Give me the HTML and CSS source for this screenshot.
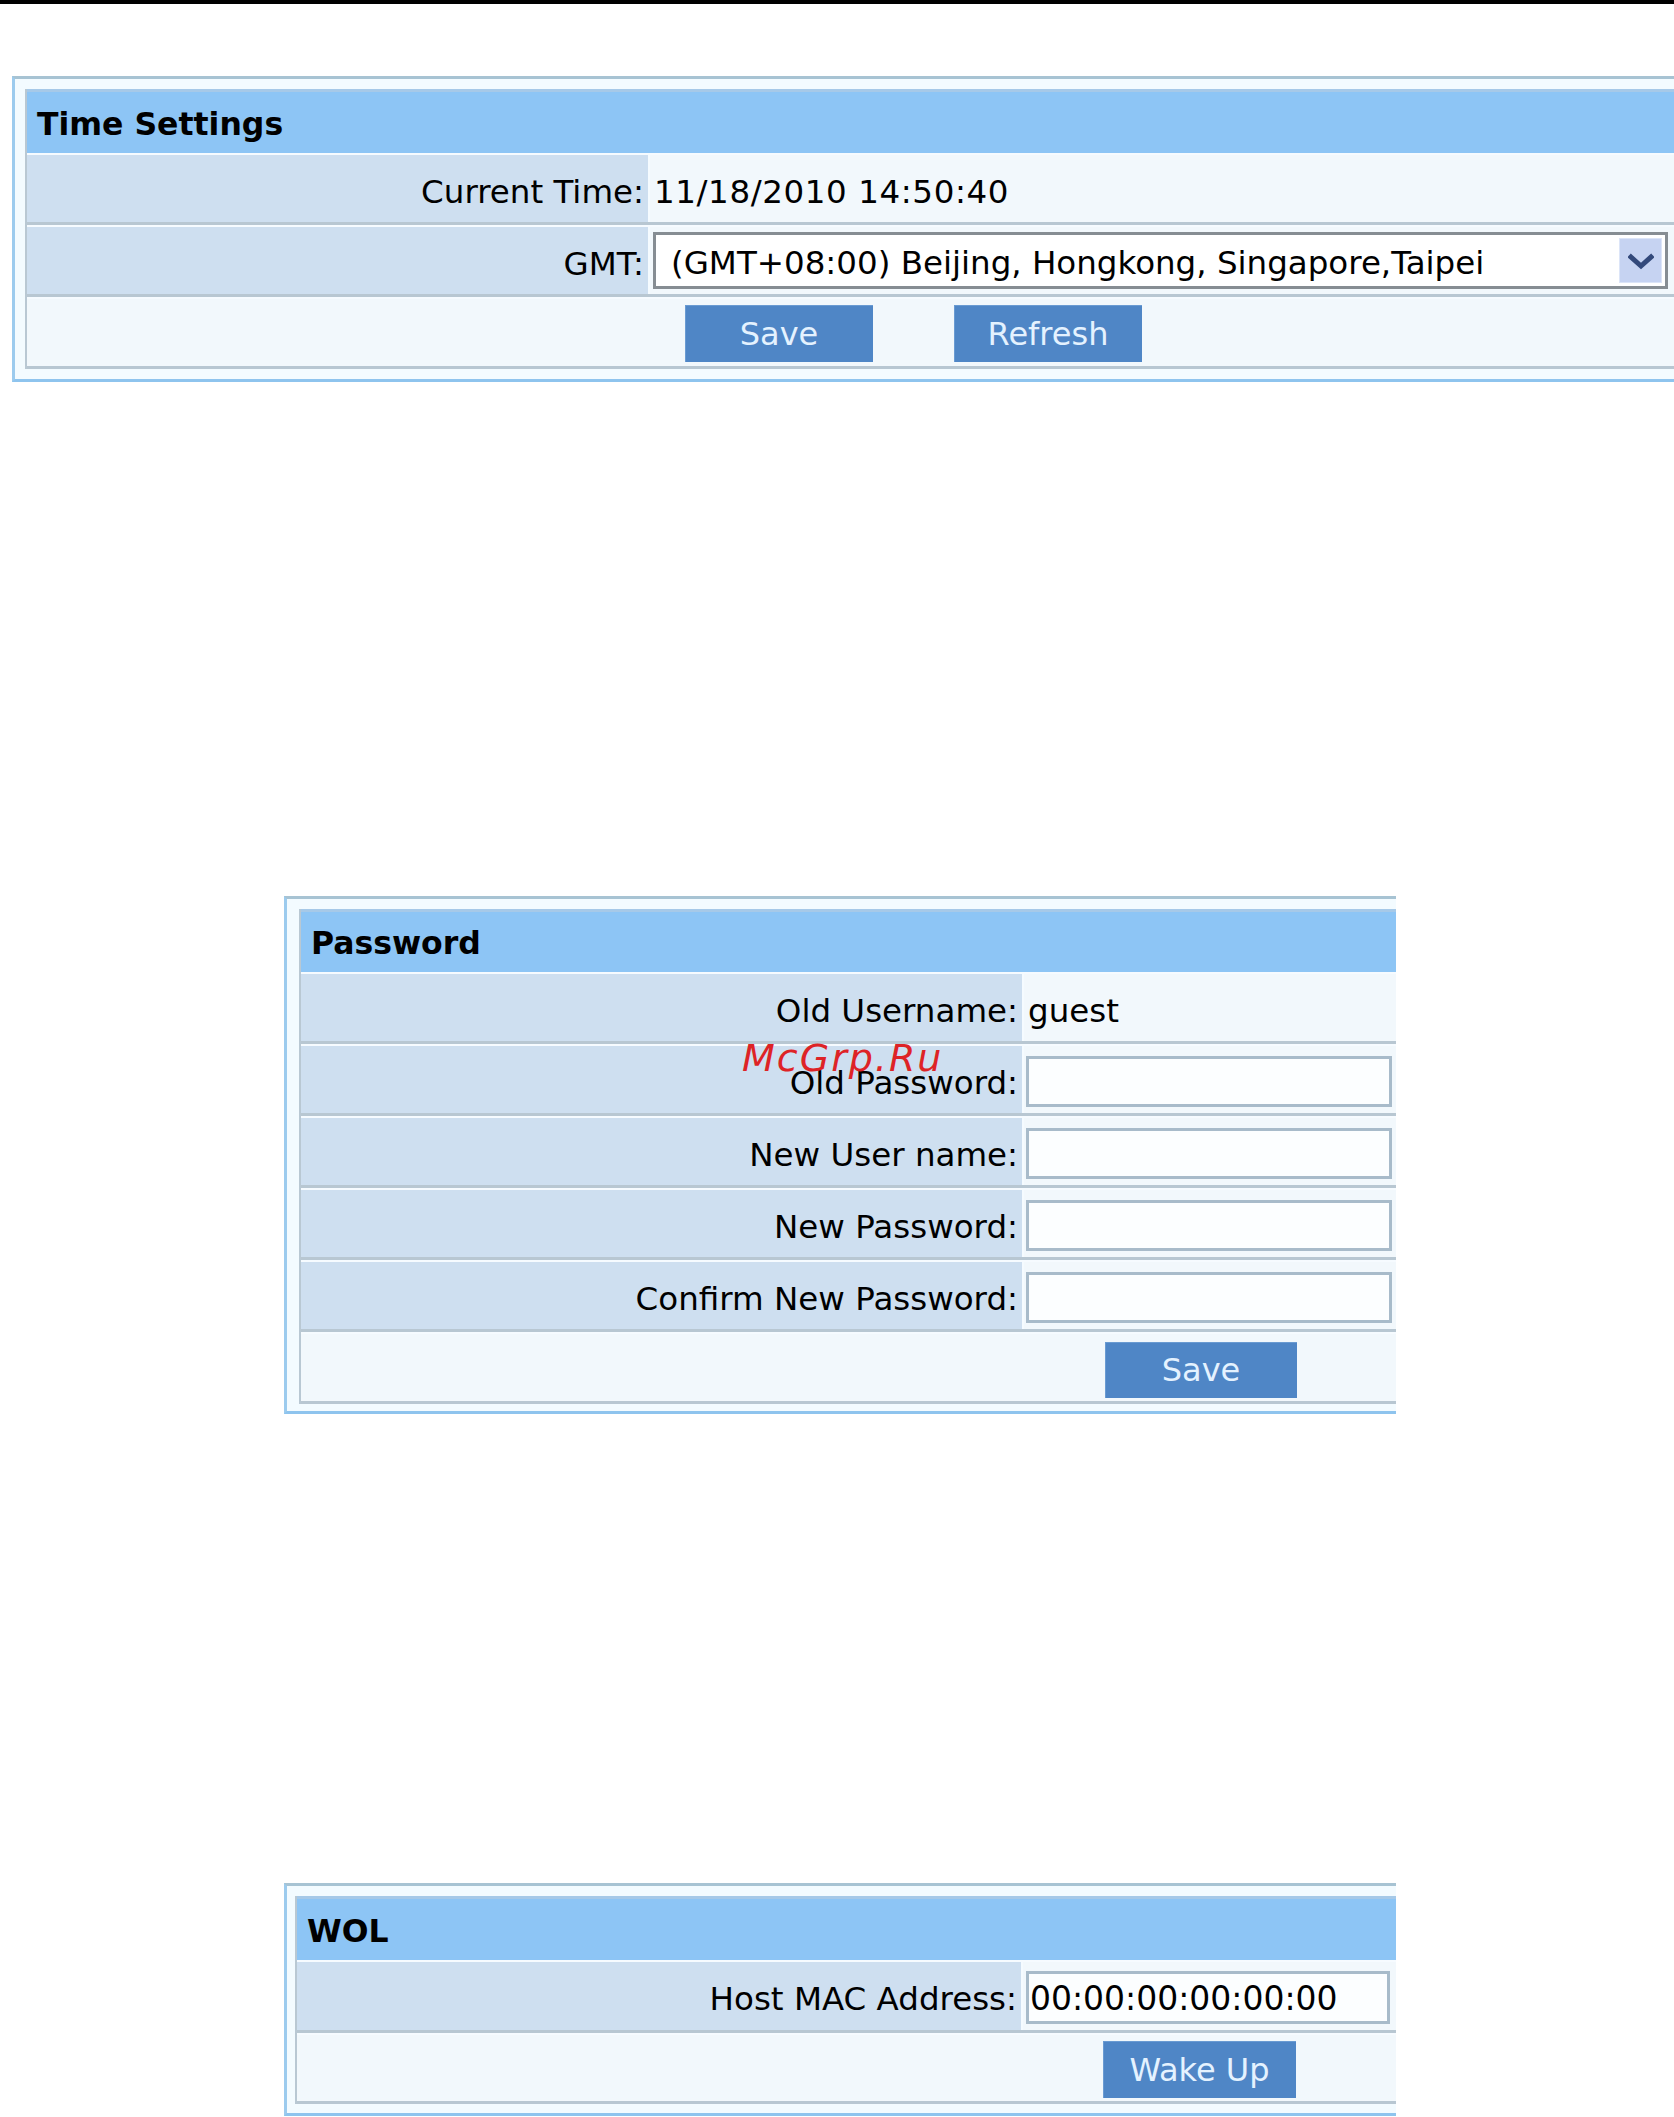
FILE: index.html
```html
<!DOCTYPE html>
<html lang="en">
<head>
<meta charset="utf-8">
<title>Settings</title>
<link rel="stylesheet" href="styles.css">
</head>
<body>
<div class="topline"></div>

<section class="panel panel-time">
  <div class="panel-inner">
    <div class="panel-head">Time Settings</div>
    <div class="row">
      <div class="label">Current Time:</div>
      <div class="value date">11/18/2010 14:50:40</div>
    </div>
    <div class="row">
      <div class="label">GMT:</div>
      <div class="value field">
        <div class="select">
          <span class="select-text">(GMT+08:00) Beijing, Hongkong, Singapore,Taipei</span>
          <span class="select-arrow">
            <svg width="26" height="18" viewBox="0 0 26 18"><polyline points="3,4 13,13 23,4" fill="none" stroke="#33497b" stroke-width="5" stroke-linecap="square"/></svg>
          </span>
        </div>
      </div>
    </div>
    <div class="row actions">
      <button class="btn">Save</button>
      <button class="btn">Refresh</button>
    </div>
  </div>
</section>

<section class="panel panel-pass">
  <div class="panel-inner">
    <div class="panel-head">Password</div>
    <div class="row">
      <div class="label">Old Username:</div>
      <div class="value">guest</div>
    </div>
    <div class="row">
      <div class="label">Old Password:</div>
      <div class="value field"><div class="input"></div></div>
    </div>
    <div class="row">
      <div class="label">New User name:</div>
      <div class="value field"><div class="input"></div></div>
    </div>
    <div class="row">
      <div class="label">New Password:</div>
      <div class="value field"><div class="input"></div></div>
    </div>
    <div class="row">
      <div class="label">Confirm New Password:</div>
      <div class="value field"><div class="input"></div></div>
    </div>
    <div class="row actions">
      <button class="btn">Save</button>
    </div>
  </div>
  <div class="watermark">McGrp.Ru</div>
</section>

<section class="panel panel-wol">
  <div class="panel-inner">
    <div class="panel-head">WOL</div>
    <div class="row">
      <div class="label">Host MAC Address:</div>
      <div class="value field"><div class="input mac">00:00:00:00:00:00</div></div>
    </div>
    <div class="row actions">
      <button class="btn">Wake Up</button>
    </div>
  </div>
</section>
</body>
</html>
```

FILE: styles.css
```css
html, body {
  margin: 0;
  padding: 0;
  background: #ffffff;
  overflow-x: hidden;
}

body {
  font-family: "DejaVu Sans", "Liberation Sans", sans-serif;
  font-size: 32.5px;
  color: #000000;
}

.topline {
  height: 4px;
  background: #000000;
}

/* ---------- panel shell ---------- */
.panel {
  box-sizing: border-box;
  background: #f3fbff;
  border-top: 3px solid #a7c3d3;
  border-left: 3px solid #9ccbee;
  border-bottom: 3px solid #8ec4ee;
  position: relative;
}

.panel-inner {
  border-left: 2px solid #b9c8d3;
}

.panel-head {
  box-sizing: border-box;
  display: flex;
  align-items: center;
  background: #8dc5f5;
  border-top: 3px solid #a6c9e8;
  font-weight: bold;
  font-size: 31.5px;
  padding-left: 10px;
  padding-top: 2px;
}

.row {
  display: grid;
  column-gap: 2px;
  background: #f5fbff;
  border-top: 2px solid #f6fbff;
  border-bottom: 3px solid #b8c7d2;
}

.label {
  background: #cedff0;
  display: flex;
  align-items: center;
  justify-content: flex-end;
  padding: 6px 4px 0 0;
  white-space: nowrap;
}

.value {
  background: #f2f8fc;
  display: flex;
  align-items: center;
  padding: 6px 0 0 4px;
  white-space: nowrap;
}

.value.date {
  letter-spacing: 0.6px;
}

.value.field {
  padding: 0;
}

.actions {
  display: flex;
  align-items: center;
  background: #f2f8fc;
}

.btn {
  border: none;
  background: #4f86c6;
  color: #e4f2ff;
  font-family: "DejaVu Sans", "Liberation Sans", sans-serif;
  font-size: 32px;
  padding: 0;
  margin: 0;
  display: flex;
  align-items: center;
  justify-content: center;
  box-shadow: inset 1px 1px 0 #6a9bd2;
}

/* ---------- select ---------- */
.select {
  box-sizing: border-box;
  display: flex;
  align-items: center;
  justify-content: space-between;
  height: 57px;
  flex: 1;
  margin: 0 6px 0 3px;
  border: 3px solid #868d93;
  background: #ffffff;
  padding: 0 3px 0 15px;
}

.select-text {
  padding-top: 4px;
  white-space: nowrap;
}

.select-arrow {
  box-sizing: border-box;
  width: 43px;
  height: 45px;
  background: #c6d3f2;
  border: 1px solid #dce5f8;
  display: flex;
  align-items: center;
  justify-content: center;
}

.select-arrow svg {
  display: block;
  margin-top: 2px;
}

/* ---------- inputs ---------- */
.input {
  box-sizing: border-box;
  border: 3px solid #a8bbca;
  background: #fcfeff;
  display: flex;
  align-items: center;
}

/* ---------- Time Settings ---------- */
.panel-time {
  margin: 72px 0 0 12px;
  padding: 10px 0 10px 10px;
}

.panel-time .panel-head {
  height: 64px;
}

.panel-time .row {
  grid-template-columns: 621px 1fr;
  height: 67px;
}

.panel-time .actions {
  padding-left: 658px;
  gap: 81px;
}

.panel-time .btn {
  width: 188px;
  height: 57px;
  margin-top: 2px;
}

/* ---------- Password ---------- */
.panel-pass {
  width: 1112px;
  margin: 514px 0 0 284px;
  padding: 10px 0 7px 12px;
}

.panel-pass .panel-head {
  height: 63px;
}

.panel-pass .row {
  grid-template-columns: 721px 1fr;
  height: 67px;
}

.panel-pass .input {
  width: 366px;
  height: 51px;
  margin: 4px 0 0 2px;
}

.panel-pass .actions {
  padding-left: 804px;
}

.panel-pass .btn {
  width: 192px;
  height: 56px;
  margin-top: 4px;
}

.watermark {
  position: absolute;
  left: 455px;
  top: 140px;
  font-family: "DejaVu Sans", sans-serif;
  font-style: italic;
  font-size: 38px;
  line-height: 1;
  letter-spacing: 2px;
  color: #de2326;
  white-space: nowrap;
}

/* ---------- WOL ---------- */
.panel-wol {
  width: 1112px;
  margin: 469px 0 0 284px;
  padding: 10px 0 9px 8px;
}

.panel-wol .panel-head {
  height: 64px;
}

.panel-wol .row {
  grid-template-columns: 724px 1fr;
  height: 68px;
}

.panel-wol .actions {
  height: 66px;
  padding-left: 806px;
}

.panel-wol .input {
  width: 364px;
  height: 53px;
  margin: 2px 0 0 3px;
  padding: 3px 0 0 1px;
  font-size: 33px;
}

.panel-wol .btn {
  width: 193px;
  height: 57px;
  margin-top: 3px;
}
```
